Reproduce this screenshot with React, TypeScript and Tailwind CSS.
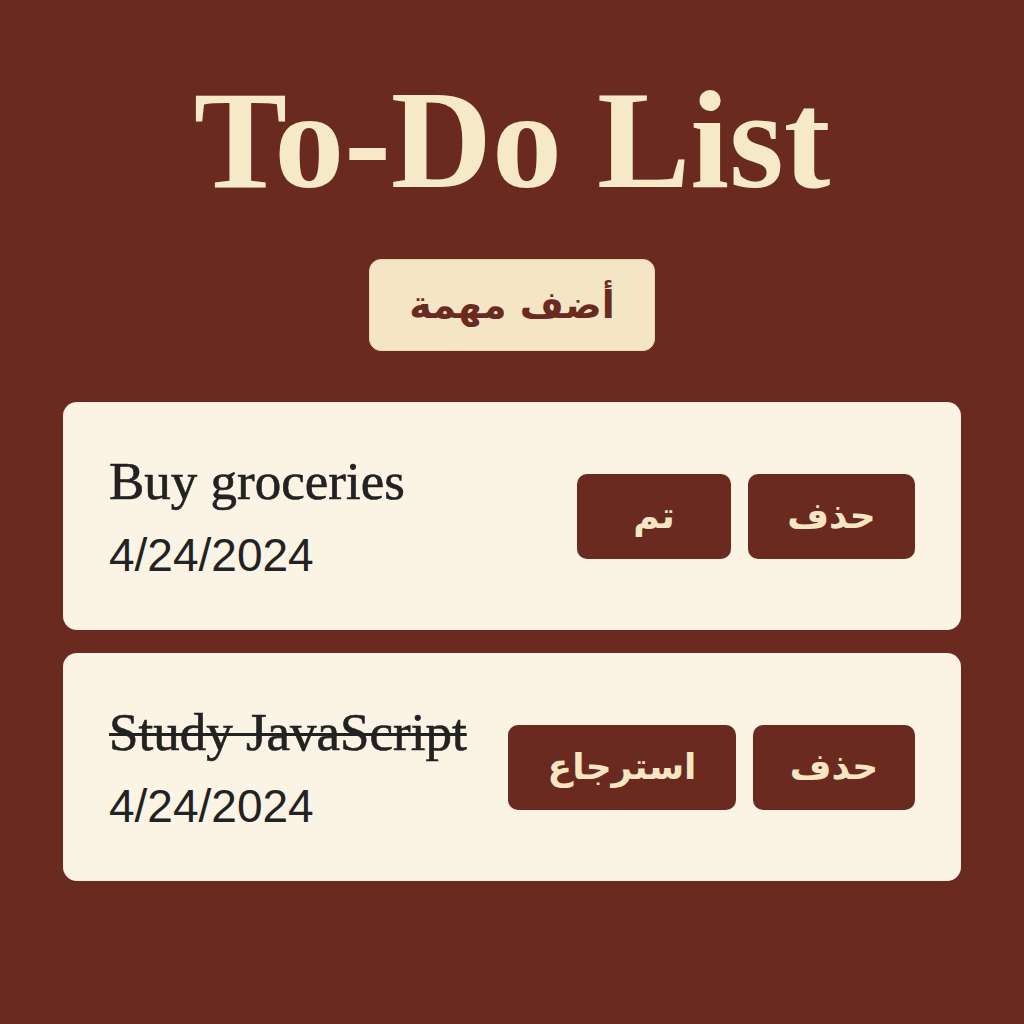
import { useState } from "react";

type Task = {
  id: number;
  title: string;
  date: string;
  done: boolean;
};

const initialTasks: Task[] = [
  { id: 1, title: "Buy groceries", date: "4/24/2024", done: false },
  { id: 2, title: "Study JavaScript", date: "4/24/2024", done: true },
];

export default function App() {
  const [tasks, setTasks] = useState<Task[]>(initialTasks);

  const toggleTask = (id: number) => {
    setTasks((list) =>
      list.map((t) => (t.id === id ? { ...t, done: !t.done } : t))
    );
  };

  const removeTask = (id: number) => {
    setTasks((list) => list.filter((t) => t.id !== id));
  };

  return (
    <section className="min-h-[1024px] w-full bg-[#6b2a1f] pt-[70px] pb-10">
      <h1 className="text-center text-[140px] leading-[1] font-bold text-[#f6e9c8] font-['Liberation_Serif',serif]">
        To-Do List
      </h1>

      <div className="flex justify-center mt-[49px]">
        <button
          dir="rtl"
          className="w-[286px] h-[92px] rounded-[12px] bg-[#f4e6c5] border border-[#e9d6ac] text-[#6b2a1f] text-[38px] font-bold font-['DejaVu_Sans',sans-serif]"
        >
          أضف مهمة
        </button>
      </div>

      <main className="w-[898px] mx-auto mt-[51px] flex flex-col gap-[23px]">
        {tasks.map((task) => (
          <div
            key={task.id}
            className="h-[228px] rounded-[14px] bg-[#fbf3e4] flex items-center justify-between pl-[46px] pr-[46px]"
          >
            <div className="flex flex-col text-[#222222]">
              <p
                className={`text-[53px] leading-[1] font-['Liberation_Serif',serif] [-webkit-text-stroke:0.6px_#222222] ${
                  task.done ? "line-through decoration-[3px]" : ""
                }`}
              >
                {task.title}
              </p>
              <p className="mt-[24px] text-[46px] leading-[1] font-['Liberation_Sans',sans-serif]">
                {task.date}
              </p>
            </div>

            <div dir="rtl" className="flex gap-[17px]">
              <button
                onClick={() => removeTask(task.id)}
                className={`h-[85px] rounded-[10px] bg-[#6b2a1f] text-[#f6e6c4] text-[36px] font-bold font-['DejaVu_Sans',sans-serif] ${
                  task.done ? "w-[162px]" : "w-[167px]"
                }`}
              >
                حذف
              </button>
              <button
                onClick={() => toggleTask(task.id)}
                className={`h-[85px] rounded-[10px] bg-[#6b2a1f] text-[#f6e6c4] text-[36px] font-bold font-['DejaVu_Sans',sans-serif] ${
                  task.done ? "w-[228px]" : "w-[154px]"
                }`}
              >
                {task.done ? "استرجاع" : "تم"}
              </button>
            </div>
          </div>
        ))}
      </main>
    </section>
  );
}
